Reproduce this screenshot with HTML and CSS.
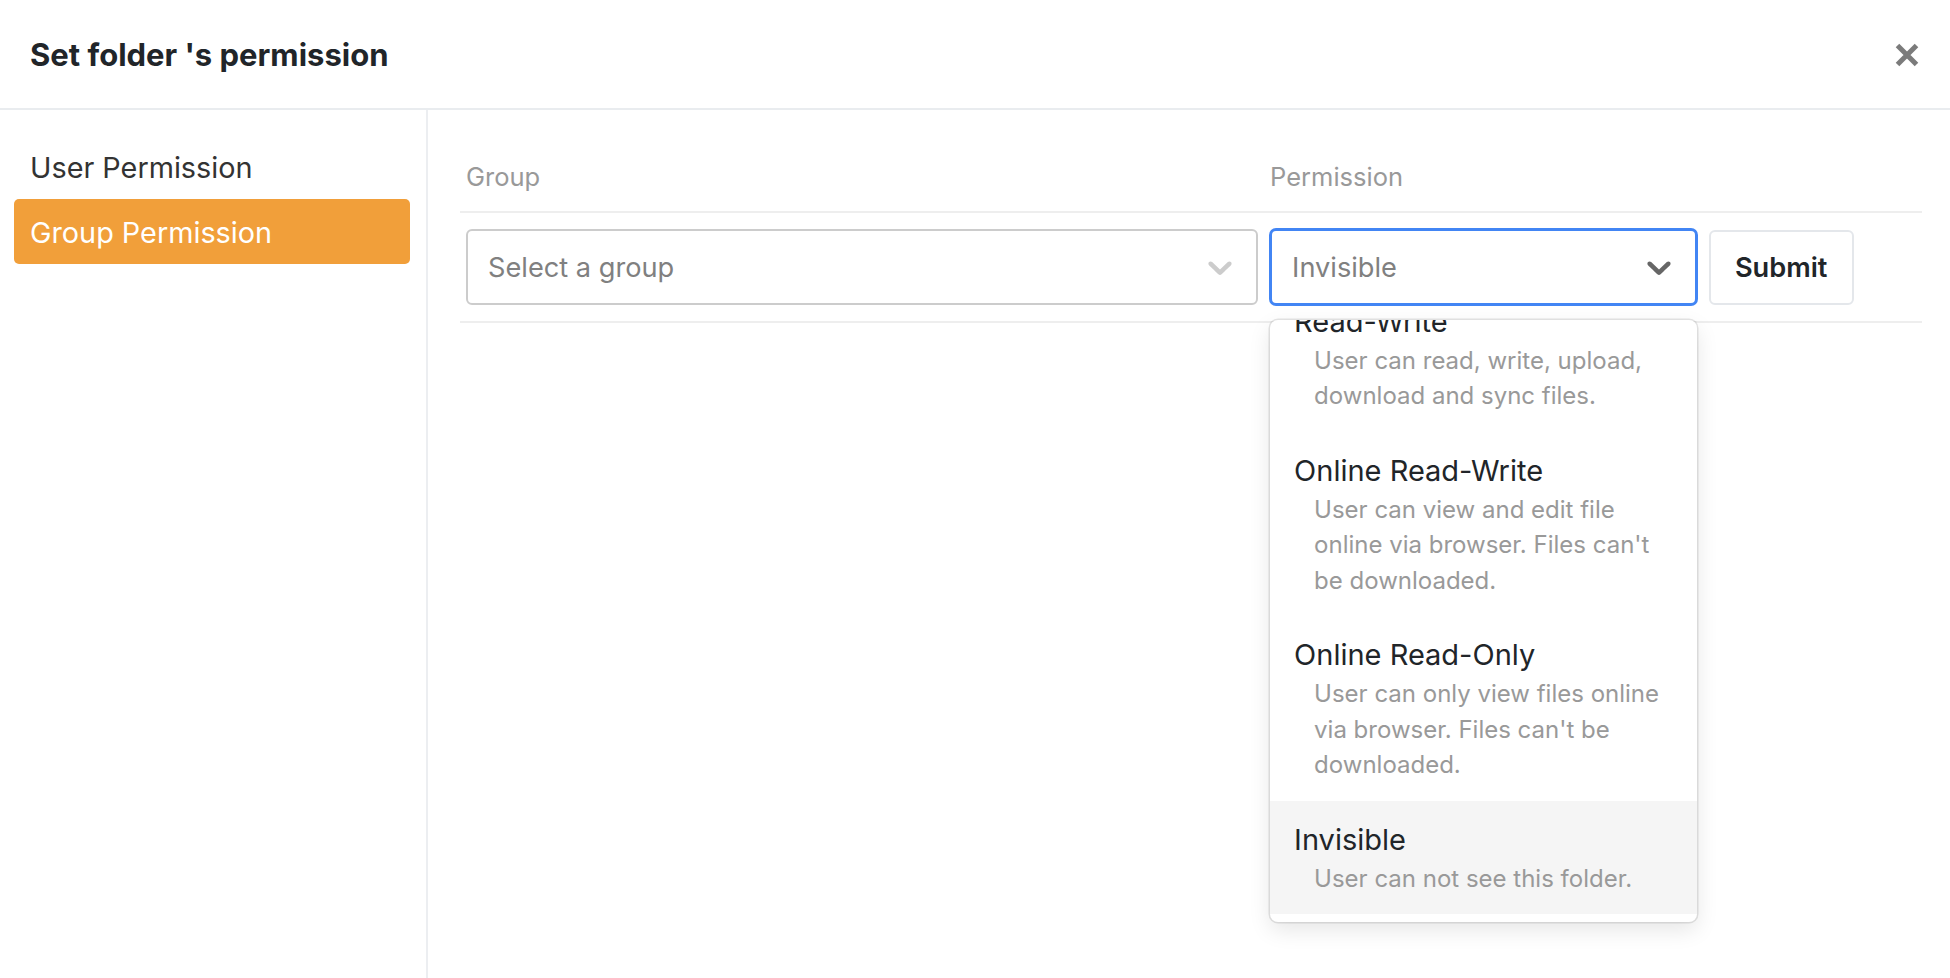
FILE: index.html
```html
<!DOCTYPE html>
<html lang="en">
<head>
<meta charset="utf-8">
<title>Set folder's permission</title>
<link rel="stylesheet" href="styles.css">
</head>
<body>
<div class="dialog">
  <header class="dlg-header">
    <h5 class="dlg-title">Set folder 's permission</h5>
    <button class="close" aria-label="Close">
      <svg width="24" height="24" viewBox="0 0 24 24"><path d="M2.5 2.5 L21.5 21.5 M21.5 2.5 L2.5 21.5" stroke="#7b7b7b" stroke-width="5" fill="none"/></svg>
    </button>
  </header>
  <div class="dlg-body">
    <nav class="side-nav">
      <a class="nav-item">User Permission</a>
      <a class="nav-item active">Group Permission</a>
    </nav>
    <main class="content">
      <table class="perm-table">
        <colgroup><col class="c1"><col class="c2"><col class="c3"></colgroup>
        <thead>
          <tr><th>Group</th><th>Permission</th><th></th></tr>
        </thead>
        <tbody>
          <tr>
            <td>
              <div class="select">
                <span class="value">Select a group</span>
                <span class="indicator"><svg width="40" height="40" viewBox="0 0 20 20"><path d="M4.516 7.548c0.436-0.446 1.043-0.481 1.576 0L10 11.295l3.908-3.747c0.533-0.481 1.141-0.446 1.574 0 0.436 0.445 0.408 1.197 0 1.615-0.406 0.418-4.695 4.502-4.695 4.502-0.217 0.223-0.502 0.335-0.787 0.335s-0.57-0.112-0.789-0.335c0 0-4.287-4.084-4.695-4.502s-0.436-1.17 0-1.615z"/></svg></span>
              </div>
            </td>
            <td>
              <div class="select-wrap">
                <div class="select focused">
                  <span class="value">Invisible</span>
                  <span class="indicator"><svg width="40" height="40" viewBox="0 0 20 20"><path d="M4.516 7.548c0.436-0.446 1.043-0.481 1.576 0L10 11.295l3.908-3.747c0.533-0.481 1.141-0.446 1.574 0 0.436 0.445 0.408 1.197 0 1.615-0.406 0.418-4.695 4.502-4.695 4.502-0.217 0.223-0.502 0.335-0.787 0.335s-0.57-0.112-0.789-0.335c0 0-4.287-4.084-4.695-4.502s-0.436-1.17 0-1.615z"/></svg></span>
                </div>
                <div class="menu">
                  <div class="option">
                    <div class="opt-title">Read-Write</div>
                    <div class="opt-desc">User can read, write, upload,<br>download and sync files.</div>
                  </div>
                  <div class="option">
                    <div class="opt-title">Online Read-Write</div>
                    <div class="opt-desc">User can view and edit file<br>online via browser. Files can't<br>be downloaded.</div>
                  </div>
                  <div class="option">
                    <div class="opt-title">Online Read-Only</div>
                    <div class="opt-desc">User can only view files online<br>via browser. Files can't be<br>downloaded.</div>
                  </div>
                  <div class="option selected">
                    <div class="opt-title">Invisible</div>
                    <div class="opt-desc">User can not see this folder.</div>
                  </div>
                </div>
              </div>
            </td>
            <td><button class="btn-submit">Submit</button></td>
          </tr>
        </tbody>
      </table>
    </main>
  </div>
</div>
</body>
</html>
```

FILE: styles.css
```css
* { box-sizing: border-box; }
html, body { margin: 0; height: 100%; }
body {
  font-family: Inter, "Noto Sans", sans-serif;
  color: #212529;
  background: #fff;
}
.dialog { display: flex; flex-direction: column; height: 100vh; }
.dlg-header {
  display: flex;
  align-items: center;
  justify-content: space-between;
  height: 110px;
  flex-shrink: 0;
  padding: 0 31px 0 30px;
  border-bottom: 2px solid #e9ecef;
}
.dlg-title { margin: 0; font-size: 31px; font-weight: 700; color: #212529; }
.close {
  border: 0; background: none; padding: 0; margin-top: 2px;
  width: 24px; height: 24px; display: flex; cursor: pointer;
}
.dlg-body { flex: 1; display: flex; min-height: 0; }
.side-nav {
  width: 428px;
  flex-shrink: 0;
  border-right: 2px solid #eceef1;
  padding: 24px 16px 0 14px;
  display: flex;
  flex-direction: column;
}
.nav-item {
  display: flex;
  align-items: center;
  height: 65px;
  padding: 2px 16px 0;
  border-radius: 5px;
  font-size: 28.8px;
  color: #333;
}
.nav-item.active { background: #f19f3a; color: #fff; }
.content { flex: 1; padding: 31px 28px 0 32px; }
.perm-table { width: 100%; border-collapse: separate; border-spacing: 0; table-layout: fixed; }
.c1 { width: 55%; }
.c2 { width: 30%; }
.c3 { width: 15%; }
.perm-table th {
  font-weight: 400;
  text-align: left;
  font-size: 25.5px;
  color: #999;
  line-height: 40px;
  padding: 16px 6px 14px;
  border-bottom: 2px solid #eee;
}
.perm-table td { padding: 16px 6px; border-bottom: 2px solid #eee; vertical-align: middle; }
.select {
  display: flex;
  align-items: center;
  height: 76px;
  border: 2px solid #ccc;
  border-radius: 6px;
  background: #fff;
  padding-left: 20px;
}
.select .value { flex: 1; font-size: 27.2px; color: #808080; white-space: nowrap; }
.indicator { display: flex; padding: 0 16px; }
.indicator svg { fill: #ccc; }
.select.focused { border-color: #4285f4; box-shadow: 0 0 0 1px #4285f4; }
.select.focused .indicator svg { fill: #666; }
.btn-submit {
  width: 145px;
  height: 75px;
  border: 2px solid #e4e7eb;
  border-radius: 6px;
  background: #fff;
  font-family: inherit;
  font-size: 27.2px;
  font-weight: 600;
  color: #212529;
  padding: 0;
}
.select-wrap { position: relative; }
.menu {
  position: absolute;
  left: 0;
  right: 0;
  top: calc(100% + 15px);
  height: 602px;
  background: #fff;
  border-radius: 8px;
  box-shadow: 0 0 0 1.5px rgba(0,0,0,0.1), 0 8px 22px rgba(0,0,0,0.1);
  overflow: hidden;
  display: flex;
  flex-direction: column;
  justify-content: flex-end;
  padding-bottom: 8px;
  z-index: 5;
}
.option { flex-shrink: 0; padding: 18px 24px; }
.option.selected { background: #f5f5f5; }
.opt-title { font-size: 29px; line-height: 42px; color: #212529; white-space: nowrap; }
.opt-desc { font-size: 24px; line-height: 35.5px; color: #999; margin-left: 20px; white-space: nowrap; }
```
